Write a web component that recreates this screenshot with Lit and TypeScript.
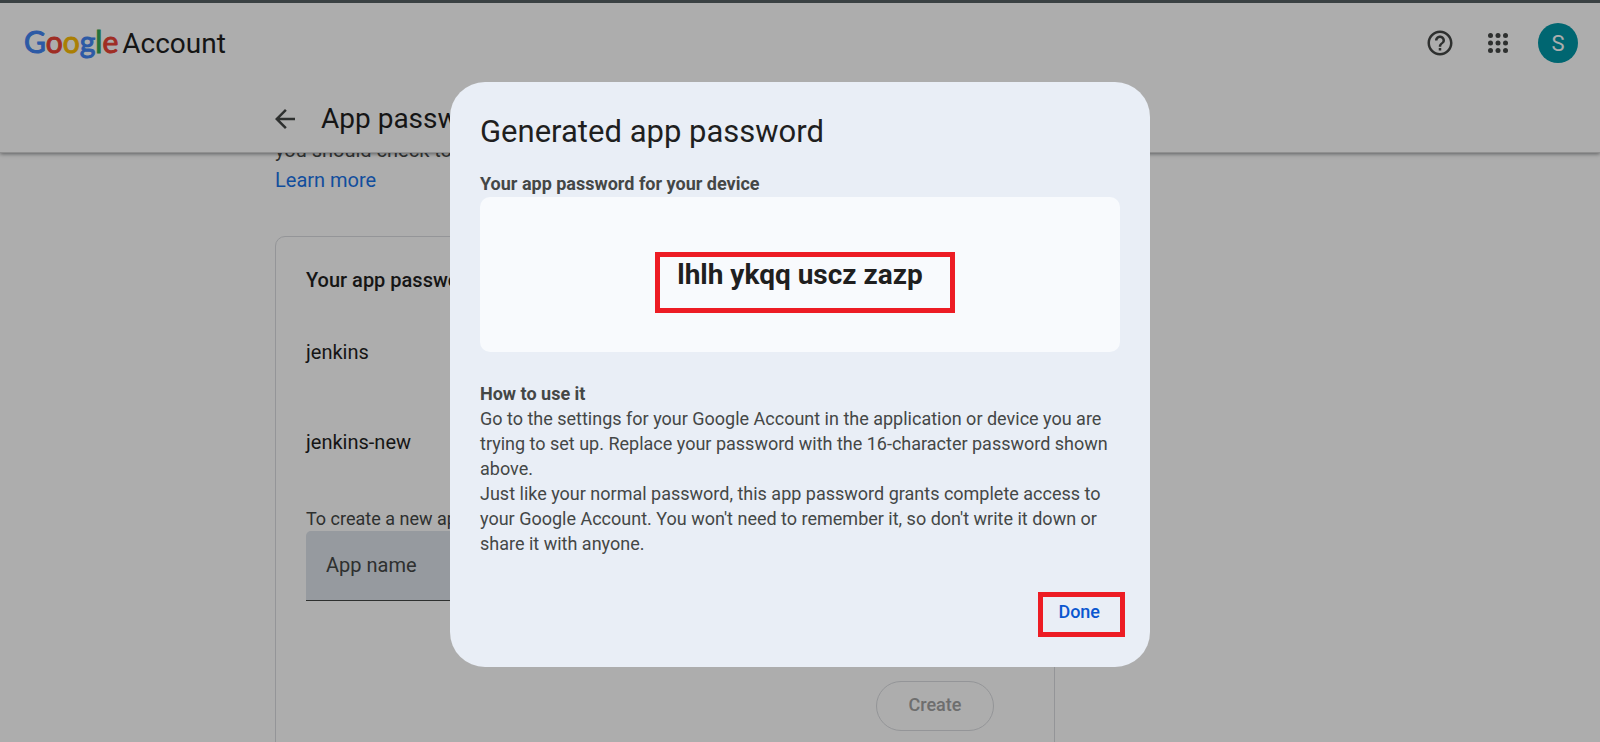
import { LitElement, html, svg, css } from "lit";
import { customElement, state } from "lit/decorators.js";

@customElement("account-header")
class AccountHeader extends LitElement {
  static styles = css`
    :host {
      display: block;
      position: relative;
      background: #fff;
      border-top: 3px solid #566164;
      border-bottom: 1px solid #d5d5d5;
      box-shadow: 0 1px 4px rgba(60, 64, 67, 0.6);
      color: #1f1f1f;
      font-family: Roboto, "Liberation Sans", sans-serif;
    }
    .bar {
      display: flex;
      align-items: center;
      justify-content: space-between;
      height: 80px;
      padding: 0 22px 0 24px;
    }
    .brand {
      display: flex;
      align-items: baseline;
      gap: 4px;
      font-size: 28px;
      line-height: 40px;
      padding-bottom: 2px;
      color: #1f1f1f;
      text-decoration: none;
    }
    .google {
      font-family: Lato, Roboto, sans-serif;
      font-size: 30px;
      -webkit-text-stroke: 1px currentColor;
    }
    .blue { color: #4285f4; }
    .red { color: #ea4335; }
    .yellow { color: #fbbc05; }
    .green { color: #34a853; }
    .tools {
      display: flex;
      align-items: center;
      gap: 25px;
    }
    .icons {
      display: flex;
      gap: 28px;
    }
    button {
      display: flex;
      border: 0;
      padding: 0;
      background: none;
      color: #444746;
      font: inherit;
    }
    .avatar {
      align-items: center;
      justify-content: center;
      width: 40px;
      height: 40px;
      border-radius: 50%;
      background: #0097a7;
      color: #fff;
      font-size: 22px;
    }
    .title {
      display: flex;
      align-items: center;
      gap: 26px;
      box-sizing: border-box;
      width: 100%;
      max-width: 1050px;
      height: 69px;
      margin: 0 auto;
      padding-top: 2px;
    }
    h1 {
      margin: 0;
      font-size: 28px;
      line-height: 40px;
      font-weight: 400;
    }
  `;

  render() {
    return html`
      <div class="bar">
        <a class="brand" href="#">
          <span class="google"><span class="blue">G</span><span class="red">o</span><span class="yellow">o</span><span class="blue">g</span><span class="green">l</span><span class="red">e</span></span>
          <span>Account</span>
        </a>
        <div class="tools">
          <div class="icons">
            <button aria-label="Help">
              <svg width="30" height="30" viewBox="0 0 24 24" fill="currentColor">
                <path d="M11 18h2v-2h-2v2zm1-16C6.48 2 2 6.48 2 12s4.48 10 10 10 10-4.48 10-10S17.52 2 12 2zm0 18c-4.41 0-8-3.59-8-8s3.59-8 8-8 8 3.59 8 8-3.59 8-8 8zm0-14c-2.21 0-4 1.79-4 4h2c0-1.1.9-2 2-2s2 .9 2 2c0 2-3 1.75-3 5h2c0-2.25 3-2.5 3-5 0-2.21-1.79-4-4-4z"/>
              </svg>
            </button>
            <button aria-label="Google apps">
              <svg width="30" height="30" viewBox="0 0 24 24" fill="currentColor">
                ${[6, 12, 18].map((y) => [6, 12, 18].map((x) => svg`<circle cx=${x} cy=${y} r="2"/>`))}
              </svg>
            </button>
          </div>
          <button class="avatar" aria-label="Account menu">S</button>
        </div>
      </div>
      <div class="title">
        <button aria-label="Back">
          <svg width="20" height="20" viewBox="4 4 16 16" fill="currentColor">
            <path d="M20 11H7.83l5.59-5.59L12 4l-8 8 8 8 1.41-1.41L7.83 13H20v-2z"/>
          </svg>
        </button>
        <h1>App passwords</h1>
      </div>
    `;
  }
}

@customElement("password-list")
class PasswordList extends LitElement {
  @state() names = ["jenkins", "jenkins-new"];

  static styles = css`
    :host {
      display: block;
      flex: 1;
      overflow: hidden;
      background: #fff;
      color: #1f1f1f;
      font-family: Roboto, "Liberation Sans", sans-serif;
      font-size: 20px;
      line-height: 30px;
    }
    .column {
      max-width: 1050px;
      margin: -18px auto 0;
    }
    .inner { max-width: 780px; }
    p {
      margin: 0;
      color: #444746;
    }
    a {
      color: #1a73e8;
      text-decoration: none;
    }
    .card {
      box-sizing: border-box;
      margin-top: 41px;
      padding: 28px 30px 60px;
      border: 1px solid #dadce0;
      border-radius: 10px;
    }
    h2 {
      margin: 0 0 12px;
      font-size: 20px;
      line-height: 30px;
      font-weight: 500;
    }
    ul {
      margin: 0;
      padding: 0;
      list-style: none;
    }
    li {
      display: flex;
      align-items: center;
      height: 90px;
    }
    form {
      display: flex;
      flex-direction: column;
      padding-top: 19px;
    }
    label {
      color: #444746;
      font-size: 18px;
      line-height: 25px;
    }
    input {
      box-sizing: border-box;
      width: 100%;
      height: 70px;
      padding: 0 20px 2px;
      border: 0;
      border-bottom: 1px solid #444746;
      border-radius: 5px 5px 0 0;
      background: #dde3ea;
      color: #1f1f1f;
      font: inherit;
    }
    input::placeholder {
      color: #444746;
      opacity: 1;
    }
    .create {
      align-self: flex-end;
      min-width: 118px;
      height: 50px;
      margin: 80px 30px 0 0;
      padding: 0 30px 2px;
      border: 1px solid #dadce0;
      border-radius: 25px;
      background: none;
      color: #a3a3a3;
      font: inherit;
      font-size: 18px;
      font-weight: 500;
    }
  `;

  render() {
    return html`
      <div class="column"><div class="inner">
        <p>you should check to see if your app needs this in order to sign in.</p>
        <a href="#">Learn more</a>
        <section class="card">
          <h2>Your app passwords</h2>
          <ul>${this.names.map((n) => html`<li>${n}</li>`)}</ul>
          <form>
            <label for="name">To create a new app specific password, type a name for it below…</label>
            <input id="name" type="text" placeholder="App name">
            <button class="create" type="button" disabled>Create</button>
          </form>
        </section>
      </div></div>
    `;
  }
}

@customElement("password-dialog")
class PasswordDialog extends LitElement {
  static styles = css`
    :host {
      position: fixed;
      inset: 0;
      display: flex;
      align-items: center;
      justify-content: center;
      padding-top: 7px;
      background: rgba(0, 0, 0, 0.32);
      color: #444746;
      font-family: Roboto, "Liberation Sans", sans-serif;
      font-size: 18px;
      line-height: 25px;
    }
    .dialog {
      display: flex;
      flex-direction: column;
      box-sizing: border-box;
      width: 100%;
      max-width: 700px;
      padding: 30px;
      border-radius: 35px;
      background: #e9eef6;
    }
    h2 {
      margin: 0 0 19px;
      color: #1f1f1f;
      font-size: 31px;
      line-height: 40px;
      font-weight: 400;
    }
    h3 {
      margin: 0;
      font-size: 18px;
      line-height: 25px;
      font-weight: 700;
    }
    p { margin: 0; }
    .code {
      position: relative;
      display: flex;
      align-items: center;
      justify-content: center;
      height: 155px;
      margin: 1px 0 29px;
      border-radius: 10px;
      background: #f8fafd;
      color: #1f1f1f;
      font-size: 28px;
      font-weight: 700;
    }
    .mark {
      position: absolute;
      box-sizing: border-box;
      border: 5px solid #ed1c24;
      pointer-events: none;
    }
    .code .mark {
      left: 175px;
      top: 55px;
      width: 300px;
      height: 61px;
    }
    .actions {
      position: relative;
      display: flex;
      justify-content: flex-end;
      padding-top: 31px;
    }
    .actions .mark {
      right: -5px;
      bottom: 0;
      width: 87px;
      height: 45px;
    }
    button {
      height: 50px;
      padding: 0 20px 2px;
      border: 0;
      border-radius: 25px;
      background: none;
      color: #0b57d0;
      font: inherit;
      font-weight: 500;
    }
  `;

  render() {
    return html`
      <div class="dialog" role="dialog" aria-labelledby="title">
        <h2 id="title">Generated app password</h2>
        <h3>Your app password for your device</h3>
        <div class="code">
          <span>lhlh ykqq uscz zazp</span>
          <span class="mark"></span>
        </div>
        <h3>How to use it</h3>
        <p>Go to the settings for your Google Account in the application or device you are trying to set up. Replace your password with the 16-character password shown above.</p>
        <p>Just like your normal password, this app password grants complete access to your Google Account. You won't need to remember it, so don't write it down or share it with anyone.</p>
        <div class="actions">
          <button>Done</button>
          <span class="mark"></span>
        </div>
      </div>
    `;
  }
}

@customElement("app-root")
class AppRoot extends LitElement {
  static styles = css`
    :host {
      display: flex;
      flex-direction: column;
      height: 100vh;
      overflow: hidden;
    }
    account-header { z-index: 1; }
    password-dialog { z-index: 2; }
  `;

  render() {
    return html`
      <account-header></account-header>
      <password-list></password-list>
      <password-dialog></password-dialog>
    `;
  }
}
